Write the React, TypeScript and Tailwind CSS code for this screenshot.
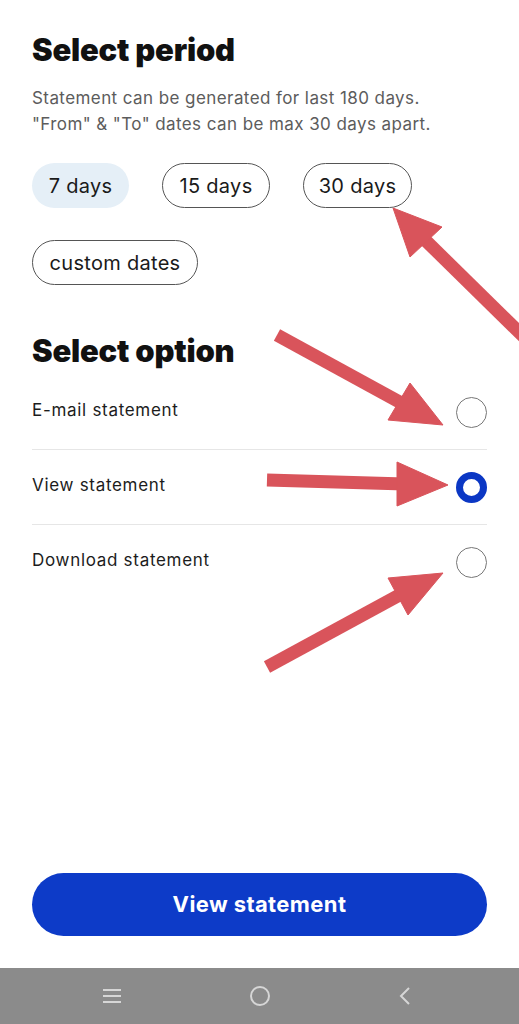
import React from "react";

const font = { fontFamily: "Inter, 'Liberation Sans', sans-serif" };

function Radio({ checked }: { checked?: boolean }) {
  return checked ? (
    <div className="w-[31px] h-[31px] rounded-full border-[7px] border-[#0b37c4] bg-white" />
  ) : (
    <div className="w-[31px] h-[31px] rounded-full border-[1.5px] border-[#777]" />
  );
}

function Row({ label, checked, last }: { label: string; checked?: boolean; last?: boolean }) {
  return (
    <div className={`flex items-center justify-between h-[75px] ${last ? "" : "border-b border-[#e6e6e6]"}`}>
      <span className="text-[17px] tracking-[0.7px] text-[#1c1c1c] -mt-[3px]">{label}</span>
      <Radio checked={checked} />
    </div>
  );
}

function Chip({ label, active, w }: { label: string; active?: boolean; w: string }) {
  return (
    <div
      className={`h-[45px] ${w} rounded-full flex items-center justify-center text-[20px] tracking-[0.3px] text-[#1a1a1a] ${
        active ? "bg-[#e5eff7]" : "border border-[#555]"
      }`}
    >
      {label}
    </div>
  );
}

export default function App() {
  const red = "#d9545b";
  return (
    <div className="relative w-[519px] h-[1024px] bg-white flex flex-col overflow-hidden" style={font}>
      <div className="px-[32px] pt-[30px] flex-1 flex flex-col">
        <h1 className="text-[31px] font-black text-[#111] leading-[40px] tracking-[-0.2px]">Select period</h1>
        <p className="mt-[15px] text-[17px] leading-[26px] tracking-[0.42px] text-[#5c5c5c]">
          Statement can be generated for last 180 days.
          <br />
          "From" &amp; "To" dates can be max 30 days apart.
        </p>
        <div className="mt-[26px] flex flex-wrap gap-x-[33px] gap-y-[32px]">
          <Chip label="7 days" active w="w-[97px]" />
          <Chip label="15 days" w="w-[108px]" />
          <Chip label="30 days" w="w-[109px]" />
          <Chip label="custom dates" w="w-[166px]" />
        </div>
        <h2 className="mt-[46px] text-[31px] font-black text-[#111] leading-[40px] tracking-[-0.2px]">Select option</h2>
        <div className="mt-[4px] flex flex-col">
          <Row label="E-mail statement" />
          <Row label="View statement" checked />
          <Row label="Download statement" last />
        </div>
        <div className="flex-1" />
        <button className="mb-[32px] h-[63px] w-full rounded-full bg-[#0d3bc8] text-white text-[22px] tracking-[0.4px] font-bold">
          View statement
        </button>
      </div>
      <div className="h-[56px] bg-[#8b8b8b] flex items-center justify-between pl-[101px] pr-[107px]">
        <svg width="22" height="18" viewBox="0 0 22 18">
          <g stroke="#d6d6d6" strokeWidth="2">
            <line x1="2" y1="3" x2="20" y2="3" />
            <line x1="2" y1="9" x2="20" y2="9" />
            <line x1="2" y1="15" x2="20" y2="15" />
          </g>
        </svg>
        <svg width="22" height="22" viewBox="0 0 22 22" className="-ml-[2px]">
          <circle cx="11" cy="11" r="9" stroke="#d6d6d6" strokeWidth="2" fill="none" />
        </svg>
        <svg width="14" height="20" viewBox="0 0 14 20">
          <polyline points="11,2 3,10 11,18" stroke="#d6d6d6" strokeWidth="2" fill="none" />
        </svg>
      </div>
      <svg className="absolute inset-0 pointer-events-none" width="519" height="1024" viewBox="0 0 519 1024">
        <g fill={red} stroke={red} strokeLinejoin="round">
          <line x1="525" y1="338" x2="420" y2="235" strokeWidth="13" />
          <polygon points="393,208 442,227 410,257" strokeWidth="1" />
          <line x1="277" y1="335" x2="405" y2="405" strokeWidth="13" />
          <polygon points="443,425 410,383 388,420" strokeWidth="1" />
          <line x1="267" y1="480" x2="405" y2="484" strokeWidth="13" />
          <polygon points="448,485 397,462 397,506" strokeWidth="1" />
          <line x1="267" y1="667" x2="405" y2="592" strokeWidth="13" />
          <polygon points="443,573 388,578 408,615" strokeWidth="1" />
        </g>
      </svg>
    </div>
  );
}
